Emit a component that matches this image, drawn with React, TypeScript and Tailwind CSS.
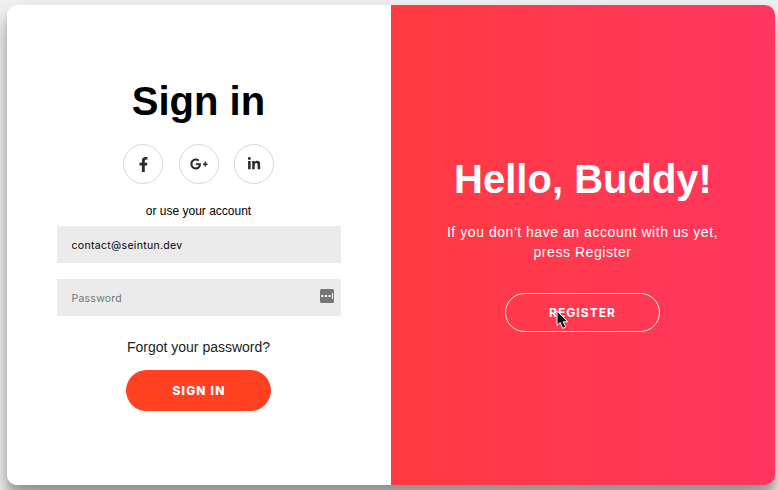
import type { ReactNode } from "react";
import { FaFacebookF, FaGooglePlusG, FaLinkedinIn } from "react-icons/fa";

function SocialButton({ label, children }: { label: string; children: ReactNode }) {
  return (
    <a href="#" aria-label={label} className="flex size-10 items-center justify-center rounded-full border border-[#d6d6d6] text-[#2c2c2c]">
      {children}
    </a>
  );
}

function Cursor() {
  return (
    <svg className="absolute left-[50px] top-[16px]" width="14" height="22" viewBox="0 0 14 22" aria-hidden="true">
      <path d="M1 1v14.5l3.2-2.9 2.5 5.8 3-1.3-2.5-5.3h4.6z" fill="#111" stroke="#fff" strokeWidth="1" />
    </svg>
  );
}

function SignInPanel() {
  return (
    <section className="flex w-1/2 flex-col items-center bg-white px-[50px] pt-[73px]">
      <h1 className="mr-[1px] text-[40px] leading-[46px] font-bold text-black">Sign in</h1>
      <div className="mt-5 mr-[1px] flex gap-[15.5px]">
        <SocialButton label="Facebook"><FaFacebookF size={15} /></SocialButton>
        <SocialButton label="Google"><FaGooglePlusG size={18} /></SocialButton>
        <SocialButton label="LinkedIn"><FaLinkedinIn size={14} /></SocialButton>
      </div>
      <span className="mt-5 mr-[1px] text-[12px] leading-[14px] text-black">or use your account</span>
      <input
        type="email"
        defaultValue="contact@seintun.dev"
        className="mt-2 h-[37px] w-full bg-[#ebebeb] px-[14.5px] pt-[2px] font-['Inter',sans-serif] text-[10.5px] tracking-[0.32px] text-black"
      />
      <div className="relative mt-4 w-full">
        <input
          type="password"
          placeholder="Password"
          className="block h-[37px] w-full bg-[#ebebeb] px-[14.5px] pt-[2px] font-['Inter',sans-serif] text-[10.5px] tracking-[0.24px] placeholder:text-[#757575]"
        />
        <svg className="absolute right-[7px] top-[10px]" width="14" height="14" viewBox="0 0 14 14" aria-hidden="true">
          <rect width="14" height="14" rx="1.5" fill="#757575" />
          <path d="M1.3 6h2v2h-2zM5 6h2v2H5zM8.6 6h2v2h-2zM12 4h1v6h-1z" fill="#fff" />
        </svg>
      </div>
      <a href="#" className="mt-[23px] mr-[1px] text-[14px] leading-4 text-[#222222]">Forgot your password?</a>
      <button className="mt-[15px] mr-[2px] h-[41px] w-[145px] rounded-full bg-[#ff4122] pl-[2px] font-['Inter',sans-serif] text-[12px] font-extrabold tracking-[1.2px] text-white">
        SIGN IN
      </button>
    </section>
  );
}

function GreetingPanel() {
  return (
    <section className="flex w-1/2 flex-col items-center bg-linear-to-r from-[#ff3b3f] to-[#ff365f] pt-[151px] text-white">
      <h1 className="text-[40px] leading-[46px] font-bold">Hello, Buddy!</h1>
      <p className="mt-5 mr-[1px] text-center text-[14px] leading-5 tracking-[0.55px] whitespace-nowrap">
        If you don't have an account with us yet,
        <br />
        press Register
      </p>
      <button className="relative mt-[31px] mr-[2px] h-[39px] w-[155px] rounded-full border border-white/90 pl-[1px] font-['Inter',sans-serif] text-[12px] font-bold tracking-[1.05px]">
        REGISTER
        <Cursor />
      </button>
    </section>
  );
}

export default function App() {
  return (
    <main className="h-[490px] w-[778px] overflow-hidden bg-[#f1f0f2] pl-[7px] pt-[5px] font-['Liberation_Sans',Arial,sans-serif]">
      <div className="flex h-[480px] w-[768px] overflow-hidden rounded-[10px] shadow-[0_14px_28px_rgba(0,0,0,0.25),0_10px_10px_rgba(0,0,0,0.22)]">
        <SignInPanel />
        <GreetingPanel />
      </div>
    </main>
  );
}
